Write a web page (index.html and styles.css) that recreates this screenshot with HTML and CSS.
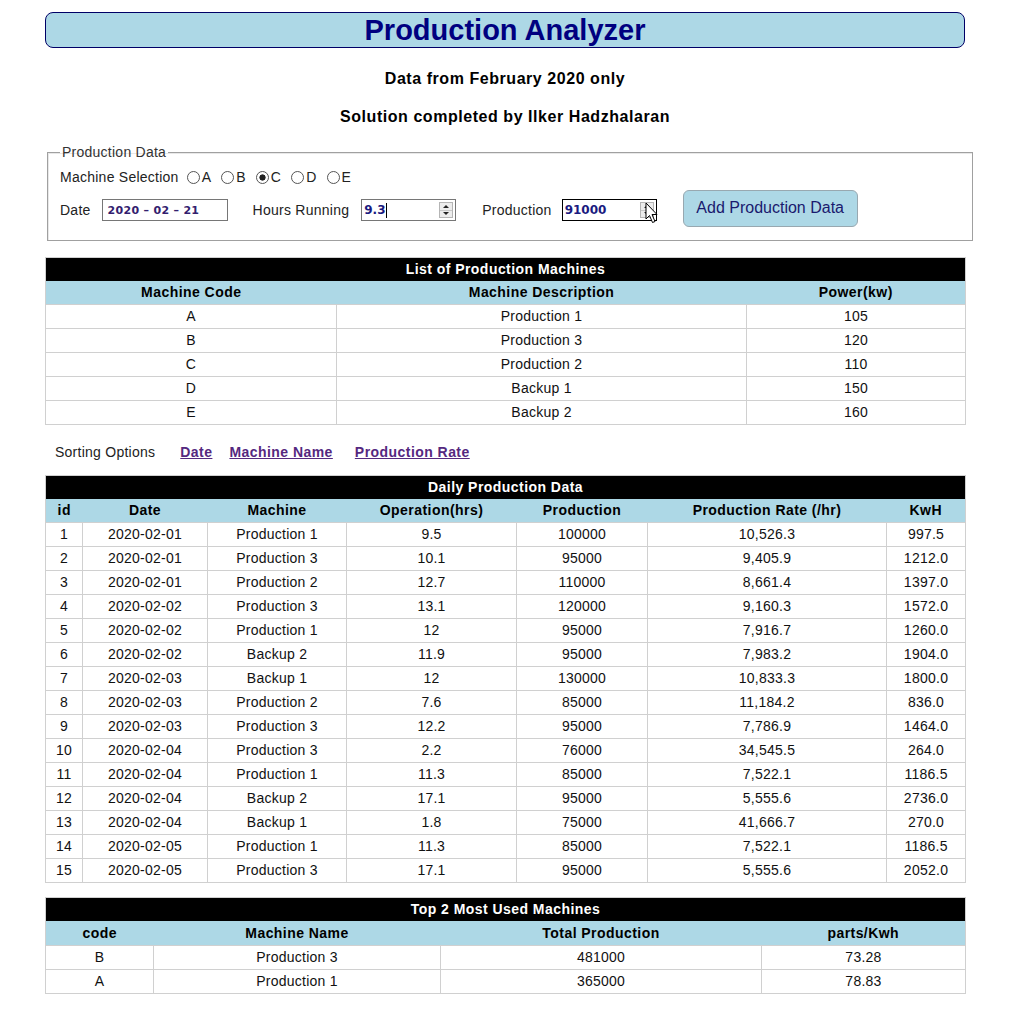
FILE: index.html
```html
<!DOCTYPE html>
<html>
<head>
<meta charset="utf-8">
<title>Production Analyzer</title>
<link rel="stylesheet" href="styles.css">
</head>
<body>
<div class="page">
  <h1 class="banner">Production Analyzer</h1>
  <h4 class="sub sub1">Data from February 2020 only</h4>
  <h4 class="sub sub2">Solution completed by Ilker Hadzhalaran</h4>

  <fieldset class="entry">
    <legend>Production Data</legend>
    <div class="row row-machines">
      <span class="lbl">Machine Selection</span>
      <label class="radio"><input type="radio" name="m">A</label>
      <label class="radio"><input type="radio" name="m">B</label>
      <label class="radio"><input type="radio" name="m" checked>C</label>
      <label class="radio"><input type="radio" name="m">D</label>
      <label class="radio"><input type="radio" name="m">E</label>
    </div>
    <div class="row row-inputs">
      <span class="lbl">Date</span>
      <div class="field date-field"><span class="val date-val">2020 – 02 – 21</span></div>
      <span class="lbl lbl-hours">Hours Running</span>
      <div class="field num-field hours-field">
        <span class="val">9.3</span><span class="caret"></span>
        <span class="spin"><span class="up"></span><span class="down"></span></span>
      </div>
      <span class="lbl lbl-prod">Production</span>
      <div class="field num-field prod-field">
        <span class="val">91000</span>
        <span class="spin"><span class="up"></span><span class="down"></span></span>
        <svg class="pointer" width="14" height="22" viewBox="0 0 14 22"><path d="M1 1 L1 17 L4.5 13.5 L7.5 20.5 L10 19.5 L7 12.5 L12 12.5 Z" fill="#fff" stroke="#000" stroke-width="1" stroke-linejoin="round"/></svg>
      </div>
      <button class="add-btn" type="button">Add Production Data</button>
    </div>
  </fieldset>

  <table class="grid t-machines">
    <colgroup><col class="c1"><col class="c2"><col class="c3"></colgroup>
    <thead>
      <tr class="title"><th colspan="3">List of Production Machines</th></tr>
      <tr class="head"><th>Machine Code</th><th>Machine Description</th><th>Power(kw)</th></tr>
    </thead>
    <tbody>
      <tr><td>A</td><td>Production 1</td><td>105</td></tr>
      <tr><td>B</td><td>Production 3</td><td>120</td></tr>
      <tr><td>C</td><td>Production 2</td><td>110</td></tr>
      <tr><td>D</td><td>Backup 1</td><td>150</td></tr>
      <tr><td>E</td><td>Backup 2</td><td>160</td></tr>
    </tbody>
  </table>

  <div class="sorting">
    <span class="sort-lbl">Sorting Options</span>
    <a class="sort-link l-date" href="#">Date</a>
    <a class="sort-link l-name" href="#">Machine Name</a>
    <a class="sort-link l-rate" href="#">Production Rate</a>
  </div>

  <table class="grid t-daily">
    <colgroup><col class="c1"><col class="c2"><col class="c3"><col class="c4"><col class="c5"><col class="c6"><col class="c7"></colgroup>
    <thead>
      <tr class="title"><th colspan="7">Daily Production Data</th></tr>
      <tr class="head"><th>id</th><th>Date</th><th>Machine</th><th>Operation(hrs)</th><th>Production</th><th>Production Rate (/hr)</th><th>KwH</th></tr>
    </thead>
    <tbody>
      <tr><td>1</td><td>2020-02-01</td><td>Production 1</td><td>9.5</td><td>100000</td><td>10,526.3</td><td>997.5</td></tr>
      <tr><td>2</td><td>2020-02-01</td><td>Production 3</td><td>10.1</td><td>95000</td><td>9,405.9</td><td>1212.0</td></tr>
      <tr><td>3</td><td>2020-02-01</td><td>Production 2</td><td>12.7</td><td>110000</td><td>8,661.4</td><td>1397.0</td></tr>
      <tr><td>4</td><td>2020-02-02</td><td>Production 3</td><td>13.1</td><td>120000</td><td>9,160.3</td><td>1572.0</td></tr>
      <tr><td>5</td><td>2020-02-02</td><td>Production 1</td><td>12</td><td>95000</td><td>7,916.7</td><td>1260.0</td></tr>
      <tr><td>6</td><td>2020-02-02</td><td>Backup 2</td><td>11.9</td><td>95000</td><td>7,983.2</td><td>1904.0</td></tr>
      <tr><td>7</td><td>2020-02-03</td><td>Backup 1</td><td>12</td><td>130000</td><td>10,833.3</td><td>1800.0</td></tr>
      <tr><td>8</td><td>2020-02-03</td><td>Production 2</td><td>7.6</td><td>85000</td><td>11,184.2</td><td>836.0</td></tr>
      <tr><td>9</td><td>2020-02-03</td><td>Production 3</td><td>12.2</td><td>95000</td><td>7,786.9</td><td>1464.0</td></tr>
      <tr><td>10</td><td>2020-02-04</td><td>Production 3</td><td>2.2</td><td>76000</td><td>34,545.5</td><td>264.0</td></tr>
      <tr><td>11</td><td>2020-02-04</td><td>Production 1</td><td>11.3</td><td>85000</td><td>7,522.1</td><td>1186.5</td></tr>
      <tr><td>12</td><td>2020-02-04</td><td>Backup 2</td><td>17.1</td><td>95000</td><td>5,555.6</td><td>2736.0</td></tr>
      <tr><td>13</td><td>2020-02-04</td><td>Backup 1</td><td>1.8</td><td>75000</td><td>41,666.7</td><td>270.0</td></tr>
      <tr><td>14</td><td>2020-02-05</td><td>Production 1</td><td>11.3</td><td>85000</td><td>7,522.1</td><td>1186.5</td></tr>
      <tr><td>15</td><td>2020-02-05</td><td>Production 3</td><td>17.1</td><td>95000</td><td>5,555.6</td><td>2052.0</td></tr>
    </tbody>
  </table>

  <table class="grid t-top">
    <colgroup><col class="c1"><col class="c2"><col class="c3"><col class="c4"></colgroup>
    <thead>
      <tr class="title"><th colspan="4">Top 2 Most Used Machines</th></tr>
      <tr class="head"><th>code</th><th>Machine Name</th><th>Total Production</th><th>parts/Kwh</th></tr>
    </thead>
    <tbody>
      <tr><td>B</td><td>Production 3</td><td>481000</td><td>73.28</td></tr>
      <tr><td>A</td><td>Production 1</td><td>365000</td><td>78.83</td></tr>
    </tbody>
  </table>
</div>
</body>
</html>
```

FILE: styles.css
```css
html, body {
  margin: 0;
  padding: 0;
  background: #fff;
}
body {
  font-family: "Liberation Sans", Arial, sans-serif;
  font-size: 14px;
  letter-spacing: 0.25px;
  color: #111;
}
.page {
  width: 920px;
  margin-left: 45px;
  padding-top: 12px;
  padding-bottom: 20px;
}
.banner {
  margin: 0;
  height: 34px;
  line-height: 34px;
  border: 1px solid #000066;
  border-radius: 8px;
  background: #add8e6;
  color: #000080;
  text-align: center;
  font-size: 29px;
  font-weight: bold;
  letter-spacing: 0;
}
.sub {
  margin: 0;
  text-align: center;
  font-size: 16px;
  line-height: 18px;
  font-weight: bold;
  letter-spacing: 0.55px;
  color: #000;
}
.sub1 { margin-top: 22px; }
.sub2 { margin-top: 20px; }

.entry {
  margin: 18px 0 0 2px;
  width: 900px;
  padding: 7px 12px 12px 12px;
  border: 1px solid #a0a0a0;
  box-shadow: inset 1px 1px 0 #e8e8e8;
}
.entry legend {
  padding: 0 2px;
  font-size: 14px;
  color: #333;
}
.row {
  display: flex;
  align-items: center;
  color: #222;
}
.row-machines {
  height: 20px;
}
.radio {
  display: inline-flex;
  align-items: center;
}
.radio input {
  appearance: none;
  -webkit-appearance: none;
  width: 13px;
  height: 13px;
  margin: 0 2px 0 10px;
  border: 1px solid #555;
  border-radius: 50%;
  background: #fff;
  box-sizing: border-box;
}
.radio:first-of-type input { margin-left: 8px; }
.radio input:checked {
  background: radial-gradient(circle, #222 0 2.8px, #fff 3.4px);
}
.row-inputs {
  margin-top: 5px;
  height: 36px;
}
.field {
  box-sizing: border-box;
  height: 22px;
  border: 1px solid #767676;
  display: flex;
  align-items: center;
  position: relative;
  background: #fff;
  letter-spacing: 0;
}
.date-field {
  width: 126px;
  margin-left: 11px;
  padding-left: 5px;
}
.val {
  font-family: "DejaVu Sans", Verdana, sans-serif;
  font-weight: bold;
  font-size: 12px;
  color: #1a1a80;
}
.date-val {
  font-size: 11px;
  letter-spacing: 0.3px;
  color: #33206e;
}
.lbl-hours { margin-left: 25px; }
.lbl-prod { margin-left: 26px; }
.num-field {
  width: 95px;
  padding-left: 2px;
}
.hours-field { margin-left: 12px; }
.prod-field {
  margin-left: 10px;
  border-color: #000;
}
.caret {
  width: 1px;
  height: 15px;
  background: #000;
  margin-left: 1px;
}
.spin {
  margin-left: auto;
  margin-right: 2px;
  width: 14px;
  height: 16px;
  border: 1px solid #b5b5b5;
  background: #ececec;
  box-sizing: border-box;
  display: flex;
  flex-direction: column;
}
.spin .up, .spin .down {
  flex: 1;
  display: flex;
  align-items: center;
  justify-content: center;
}
.spin .up { border-bottom: 1px solid #c8c8c8; }
.spin .up::after {
  content: "";
  border-left: 3px solid transparent;
  border-right: 3px solid transparent;
  border-bottom: 3px solid #222;
}
.spin .down::after {
  content: "";
  border-left: 3px solid transparent;
  border-right: 3px solid transparent;
  border-top: 3px solid #222;
}
.pointer {
  position: absolute;
  left: 82px;
  top: 2px;
}
.add-btn {
  margin-left: 26px;
  width: 175px;
  height: 37px;
  border: 1px solid #98a8b0;
  border-radius: 6px;
  background: #add8e6;
  color: #1a1a6e;
  font-family: "Liberation Sans", Arial, sans-serif;
  font-size: 16px;
  letter-spacing: 0;
  padding: 0;
  margin-top: -4px;
}

.grid {
  width: 920px;
  border-collapse: collapse;
  table-layout: fixed;
  border: 1px solid #d0d0d0;
}
.grid th, .grid td {
  padding: 0;
  text-align: center;
  font-size: 14px;
  white-space: nowrap;
}
.grid th { letter-spacing: 0.45px; }
.grid .title th {
  background: #000;
  color: #fff;
  font-weight: bold;
  height: 23px;
  line-height: 23px;
}
.grid .head th {
  background: #add8e6;
  color: #000;
  font-weight: bold;
  height: 23px;
  line-height: 23px;
}
.grid td {
  border: 1px solid #d0d0d0;
  height: 23px;
  line-height: 23px;
  color: #111;
}
.t-machines { margin-top: 16px; }
.t-machines .c1 { width: 291px; }
.t-machines .c2 { width: 410px; }
.t-machines .c3 { width: 219px; }

.sorting {
  display: flex;
  align-items: center;
  height: 20px;
  margin-top: 17px;
  padding-left: 10px;
}
.sort-lbl { color: #222; }
.sort-link {
  color: #55287f;
  font-weight: bold;
  letter-spacing: 0.45px;
  text-decoration: underline;
}
.l-date { margin-left: 25px; }
.l-name { margin-left: 17px; }
.l-rate { margin-left: 22px; }

.t-daily { margin-top: 13px; }
.t-daily .c1 { width: 37px; }
.t-daily .c2 { width: 125px; }
.t-daily .c3 { width: 139px; }
.t-daily .c4 { width: 170px; }
.t-daily .c5 { width: 131px; }
.t-daily .c6 { width: 239px; }
.t-daily .c7 { width: 79px; }

.t-top { margin-top: 14px; }
.t-top .head th { height: 24px; line-height: 24px; }
.t-top .c1 { width: 108px; }
.t-top .c2 { width: 287px; }
.t-top .c3 { width: 321px; }
.t-top .c4 { width: 204px; }
```
